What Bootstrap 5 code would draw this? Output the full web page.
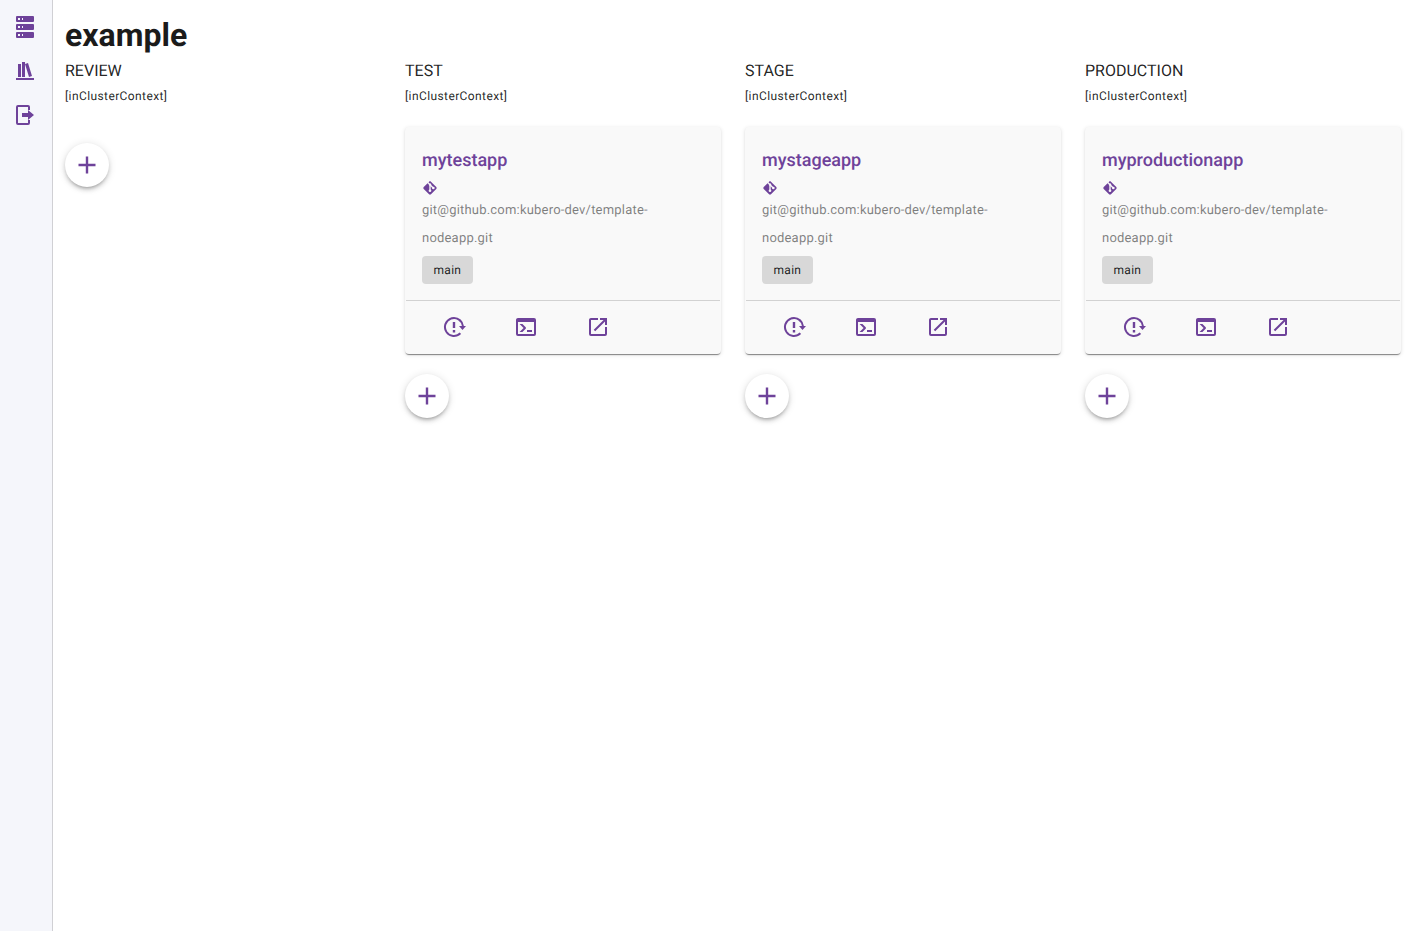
<!DOCTYPE html>
<html lang="en">
<head>
<meta charset="utf-8">
<title>example</title>
<link href="https://cdn.jsdelivr.net/npm/bootstrap@5.3.0/dist/css/bootstrap.min.css" rel="stylesheet">
<style>
html,body{height:100%}
body{font-family:Roboto,"Liberation Sans",sans-serif;color:rgba(0,0,0,.87);background:#fff;overflow:hidden;text-rendering:geometricPrecision}
.shell{height:931px}
.rail{width:53px;flex:none;background:#f5f6fb;border-right:1px solid #d0d0d4;padding-top:15px}
.rail-ico{width:24px;height:24px;display:block;margin:0 0 20px 13px;fill:#6e429a}
.pane{padding:0 8px 0 12px;min-width:0}
.app-title{font-size:32px;font-weight:700;line-height:38px;margin:16px 0 0;color:#1b1b1b;height:38px}
.stages{display:grid;grid-template-columns:repeat(4,316px);gap:24px}
.stage-name{font-size:16px;line-height:24px;margin:5px 0 0;color:rgba(0,0,0,.87);height:24px}
.stage-ctx{font-size:12px;line-height:20px;letter-spacing:.4px;margin:3px 0 0;color:rgba(0,0,0,.87);height:20px}
.stage-spacer{height:20px}
.appbox{border:0;border-radius:4px;background:#f9f9f9;margin-top:1px;box-shadow:0 2px 1px -1px rgba(0,0,0,.35),0 1px 1px 0 rgba(0,0,0,.14),0 1px 4px 0 rgba(0,0,0,.12);height:227px}
.appbox-body{padding:17px 17px 0}
.app-name{font-size:18px;font-weight:500;line-height:34px;color:#6e429a;display:block}
.git-ico{width:16px;height:16px;fill:#6e429a;display:block;margin:2px 0 1px}
.git-url{font-size:13px;line-height:28px;color:rgba(0,0,0,.5);letter-spacing:.2px;width:250px;margin:0}
.branch{display:inline-flex;align-items:center;height:28px;padding:0 11.5px;border-radius:4px;background:#d8d8d8;font-size:12px;letter-spacing:.3px;color:rgba(0,0,0,.87);margin-top:3px}
.appbox-rule{border-top:1px solid #d2d2d2;margin:16px 1px 0;height:0}
.action-row{padding:14px 0 0 37px;gap:48px}
.action-row svg{width:24px;height:24px;fill:#6e429a;display:block}
.add-btn{width:44px;height:44px;border-radius:50%;background:#fff;border:0;padding:0;display:flex;align-items:center;justify-content:center;box-shadow:0 3px 3px -2px rgba(0,0,0,.2),0 3px 4px 0 rgba(0,0,0,.14),0 1px 8px 0 rgba(0,0,0,.12)}
.add-btn svg{width:24px;height:24px;fill:#6e429a}
.add-first{margin-top:17px}
.add-next{margin-top:20px}
</style>
</head>
<body>
<div class="shell d-flex">
  <nav class="rail">
    <svg class="rail-ico" viewBox="0 0 24 24"><path d="M4,1H20A1,1 0 0,1 21,2V6A1,1 0 0,1 20,7H4A1,1 0 0,1 3,6V2A1,1 0 0,1 4,1M4,9H20A1,1 0 0,1 21,10V14A1,1 0 0,1 20,15H4A1,1 0 0,1 3,14V10A1,1 0 0,1 4,9M4,17H20A1,1 0 0,1 21,18V22A1,1 0 0,1 20,23H4A1,1 0 0,1 3,22V18A1,1 0 0,1 4,17M9,5H10V3H9V5M9,13H10V11H9V13M9,21H10V19H9V21M5,3V5H7V3H5M5,11V13H7V11H5M5,19V21H7V19H5Z"/></svg>
    <svg class="rail-ico" viewBox="0 0 24 24"><path d="M9 3V18H12V3H9M12 5L16 18L19 17L15 4L12 5M5 5V18H8V5H5M3 19V21H21V19H3Z"/></svg>
    <svg class="rail-ico" viewBox="0 0 24 24"><path d="M5 2H15A2 2 0 0 1 17 4V7H15V4H5V20H15V17H17V20A2 2 0 0 1 15 22H5A2 2 0 0 1 3 20V4A2 2 0 0 1 5 2M9 10H15V7L21 12L15 17V14H9V10Z"/></svg>
  </nav>
  <main class="pane flex-grow-1">
    <h1 class="app-title">example</h1>
    <div class="stages">
      <section>
        <div class="stage-name">REVIEW</div>
        <div class="stage-ctx">[inClusterContext]</div>
        <div class="stage-spacer"></div>
        <button class="add-btn add-first" type="button" aria-label="add"><svg viewBox="0 0 24 24"><path d="M20.5 13.2H13.2V20.5H10.8V13.2H3.5V10.8H10.8V3.5H13.2V10.8H20.5Z"/></svg></button>
      </section>
      <section>
        <div class="stage-name">TEST</div>
        <div class="stage-ctx">[inClusterContext]</div>
        <div class="stage-spacer"></div>
        <div class="card appbox">
          <div class="appbox-body">
            <a class="app-name text-decoration-none" href="#">mytestapp</a>
            <svg class="git-ico" viewBox="0 0 24 24"><path d="M2.6,10.59L8.38,4.8L10.07,6.5C9.83,7.35 10.22,8.28 11,8.73V14.27C10.4,14.61 10,15.26 10,16A2,2 0 0,0 12,18A2,2 0 0,0 14,16C14,15.26 13.6,14.61 13,14.27V9.41L15.07,11.5C15,11.65 15,11.82 15,12A2,2 0 0,0 17,14A2,2 0 0,0 19,12A2,2 0 0,0 17,10C16.82,10 16.65,10 16.5,10.07L13.93,7.5C14.19,6.57 13.71,5.55 12.78,5.16C12.35,5 11.9,4.96 11.5,5.07L9.8,3.38L10.59,2.6C11.37,1.81 12.63,1.81 13.41,2.6L21.4,10.59C22.19,11.37 22.19,12.63 21.4,13.41L13.41,21.4C12.63,22.19 11.37,22.19 10.59,21.4L2.6,13.41C1.81,12.63 1.81,11.37 2.6,10.59Z"/></svg>
            <p class="git-url">git@github.com:kubero-dev/template-nodeapp.git</p>
            <span class="branch">main</span>
          </div>
          <div class="appbox-rule"></div>
          <div class="action-row d-flex">
            <svg viewBox="0 0 24 24"><path d="M12 2A10 10 0 0 1 21.9 11H24L20.5 15L17 11H19.9A8 8 0 1 0 17.7 17.6L19.1 19A10 10 0 1 1 12 2M10.8 7H13.2V13H10.8V7M10.8 15H13.2V17.4H10.8V15Z"/></svg>
            <svg viewBox="0 0 24 24"><path d="M20,19V7H4V19H20M20,3A2,2 0 0,1 22,5V19A2,2 0 0,1 20,21H4A2,2 0 0,1 2,19V5C2,3.89 2.9,3 4,3H20M13,17V15H18V17H13M9.58,13L5.57,9H8.4L11.7,12.3C12.09,12.69 12.09,13.33 11.7,13.72L8.42,17H5.59L9.58,13Z"/></svg>
            <svg viewBox="0 0 24 24"><path d="M14,3V5H17.59L7.76,14.83L9.17,16.24L19,6.41V10H21V3M19,19H5V5H12V3H5C3.89,3 3,3.9 3,5V19A2,2 0 0,0 5,21H19A2,2 0 0,0 21,19V12H19V19Z"/></svg>
          </div>
        </div>
        <button class="add-btn add-next" type="button" aria-label="add"><svg viewBox="0 0 24 24"><path d="M20.5 13.2H13.2V20.5H10.8V13.2H3.5V10.8H10.8V3.5H13.2V10.8H20.5Z"/></svg></button>
      </section>
      <section>
        <div class="stage-name">STAGE</div>
        <div class="stage-ctx">[inClusterContext]</div>
        <div class="stage-spacer"></div>
        <div class="card appbox">
          <div class="appbox-body">
            <a class="app-name text-decoration-none" href="#">mystageapp</a>
            <svg class="git-ico" viewBox="0 0 24 24"><path d="M2.6,10.59L8.38,4.8L10.07,6.5C9.83,7.35 10.22,8.28 11,8.73V14.27C10.4,14.61 10,15.26 10,16A2,2 0 0,0 12,18A2,2 0 0,0 14,16C14,15.26 13.6,14.61 13,14.27V9.41L15.07,11.5C15,11.65 15,11.82 15,12A2,2 0 0,0 17,14A2,2 0 0,0 19,12A2,2 0 0,0 17,10C16.82,10 16.65,10 16.5,10.07L13.93,7.5C14.19,6.57 13.71,5.55 12.78,5.16C12.35,5 11.9,4.96 11.5,5.07L9.8,3.38L10.59,2.6C11.37,1.81 12.63,1.81 13.41,2.6L21.4,10.59C22.19,11.37 22.19,12.63 21.4,13.41L13.41,21.4C12.63,22.19 11.37,22.19 10.59,21.4L2.6,13.41C1.81,12.63 1.81,11.37 2.6,10.59Z"/></svg>
            <p class="git-url">git@github.com:kubero-dev/template-nodeapp.git</p>
            <span class="branch">main</span>
          </div>
          <div class="appbox-rule"></div>
          <div class="action-row d-flex">
            <svg viewBox="0 0 24 24"><path d="M12 2A10 10 0 0 1 21.9 11H24L20.5 15L17 11H19.9A8 8 0 1 0 17.7 17.6L19.1 19A10 10 0 1 1 12 2M10.8 7H13.2V13H10.8V7M10.8 15H13.2V17.4H10.8V15Z"/></svg>
            <svg viewBox="0 0 24 24"><path d="M20,19V7H4V19H20M20,3A2,2 0 0,1 22,5V19A2,2 0 0,1 20,21H4A2,2 0 0,1 2,19V5C2,3.89 2.9,3 4,3H20M13,17V15H18V17H13M9.58,13L5.57,9H8.4L11.7,12.3C12.09,12.69 12.09,13.33 11.7,13.72L8.42,17H5.59L9.58,13Z"/></svg>
            <svg viewBox="0 0 24 24"><path d="M14,3V5H17.59L7.76,14.83L9.17,16.24L19,6.41V10H21V3M19,19H5V5H12V3H5C3.89,3 3,3.9 3,5V19A2,2 0 0,0 5,21H19A2,2 0 0,0 21,19V12H19V19Z"/></svg>
          </div>
        </div>
        <button class="add-btn add-next" type="button" aria-label="add"><svg viewBox="0 0 24 24"><path d="M20.5 13.2H13.2V20.5H10.8V13.2H3.5V10.8H10.8V3.5H13.2V10.8H20.5Z"/></svg></button>
      </section>
      <section>
        <div class="stage-name">PRODUCTION</div>
        <div class="stage-ctx">[inClusterContext]</div>
        <div class="stage-spacer"></div>
        <div class="card appbox">
          <div class="appbox-body">
            <a class="app-name text-decoration-none" href="#">myproductionapp</a>
            <svg class="git-ico" viewBox="0 0 24 24"><path d="M2.6,10.59L8.38,4.8L10.07,6.5C9.83,7.35 10.22,8.28 11,8.73V14.27C10.4,14.61 10,15.26 10,16A2,2 0 0,0 12,18A2,2 0 0,0 14,16C14,15.26 13.6,14.61 13,14.27V9.41L15.07,11.5C15,11.65 15,11.82 15,12A2,2 0 0,0 17,14A2,2 0 0,0 19,12A2,2 0 0,0 17,10C16.82,10 16.65,10 16.5,10.07L13.93,7.5C14.19,6.57 13.71,5.55 12.78,5.16C12.35,5 11.9,4.96 11.5,5.07L9.8,3.38L10.59,2.6C11.37,1.81 12.63,1.81 13.41,2.6L21.4,10.59C22.19,11.37 22.19,12.63 21.4,13.41L13.41,21.4C12.63,22.19 11.37,22.19 10.59,21.4L2.6,13.41C1.81,12.63 1.81,11.37 2.6,10.59Z"/></svg>
            <p class="git-url">git@github.com:kubero-dev/template-nodeapp.git</p>
            <span class="branch">main</span>
          </div>
          <div class="appbox-rule"></div>
          <div class="action-row d-flex">
            <svg viewBox="0 0 24 24"><path d="M12 2A10 10 0 0 1 21.9 11H24L20.5 15L17 11H19.9A8 8 0 1 0 17.7 17.6L19.1 19A10 10 0 1 1 12 2M10.8 7H13.2V13H10.8V7M10.8 15H13.2V17.4H10.8V15Z"/></svg>
            <svg viewBox="0 0 24 24"><path d="M20,19V7H4V19H20M20,3A2,2 0 0,1 22,5V19A2,2 0 0,1 20,21H4A2,2 0 0,1 2,19V5C2,3.89 2.9,3 4,3H20M13,17V15H18V17H13M9.58,13L5.57,9H8.4L11.7,12.3C12.09,12.69 12.09,13.33 11.7,13.72L8.42,17H5.59L9.58,13Z"/></svg>
            <svg viewBox="0 0 24 24"><path d="M14,3V5H17.59L7.76,14.83L9.17,16.24L19,6.41V10H21V3M19,19H5V5H12V3H5C3.89,3 3,3.9 3,5V19A2,2 0 0,0 5,21H19A2,2 0 0,0 21,19V12H19V19Z"/></svg>
          </div>
        </div>
        <button class="add-btn add-next" type="button" aria-label="add"><svg viewBox="0 0 24 24"><path d="M20.5 13.2H13.2V20.5H10.8V13.2H3.5V10.8H10.8V3.5H13.2V10.8H20.5Z"/></svg></button>
      </section>
    </div>
  </main>
</div>
<script src="https://cdn.jsdelivr.net/npm/bootstrap@5.3.0/dist/js/bootstrap.bundle.min.js"></script>
</body>
</html>
